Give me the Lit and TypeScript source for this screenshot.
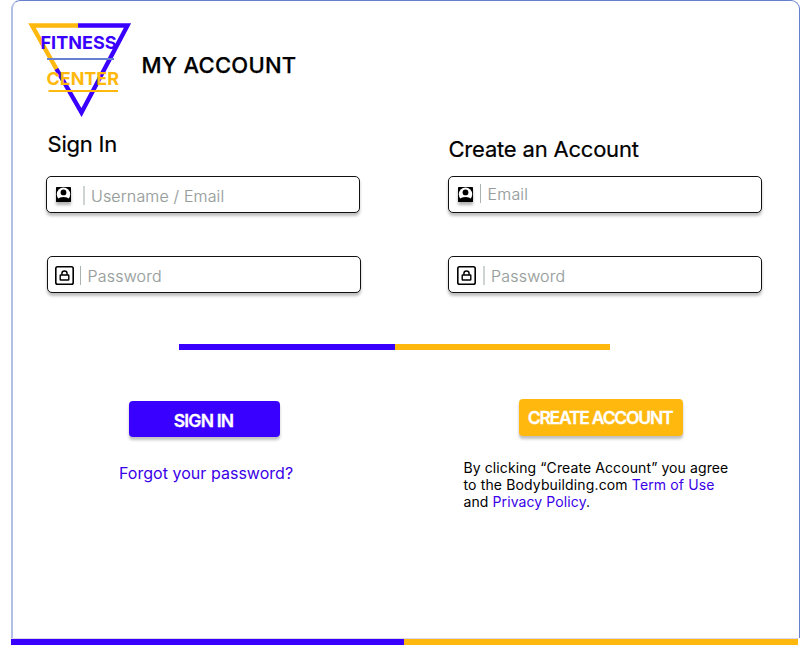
import { LitElement, html, css, svg } from "lit";
import { customElement, property } from "lit/decorators.js";

const personIcon = svg`
  <rect x="0" y="0" width="15" height="15" rx="0.6" fill="#000"/>
  <circle cx="7.5" cy="7.2" r="6.700" fill="#fff"/>
  <circle cx="7.5" cy="5.4" r="2.900" fill="#000"/>
  <path d="M1.500 14.500v-2C3 10.700 5 10 7.500 10s4.500 0.700 6 2.500v2z" fill="#000"/>`;

const lockIcon = svg`
  <rect x="0.8" y="0.8" width="17.4" height="17.4" rx="1.8" fill="#fff" stroke="#000" stroke-width="1.6"/>
  <rect x="5.200" y="9" width="8.6" height="5" rx="0.6" fill="none" stroke="#000" stroke-width="1.4"/>
  <path d="M6.900 9V7.600a2.600 2.600 0 0 1 5.200 0V9" fill="none" stroke="#000" stroke-width="1.4"/>`;

@customElement("account-field")
export class AccountField extends LitElement {
  @property() icon = "person";
  @property() label = "";

  static styles = css`
    :host { display: block; }
    .box {
      box-sizing: border-box; width: 314px; height: 37px;
      border: 1px solid #111; border-radius: 5px; background: #fff;
      box-shadow: 0 3px 3px rgba(0, 0, 0, 0.25);
      display: flex; align-items: center;
      padding-top: var(--drop, 0);
      padding-left: var(--icon-start, 9px);
    }
    svg { display: block; flex: none; overflow: visible; }
    .person { filter: drop-shadow(0 3px 1.5px rgba(0, 0, 0, 0.3)); }
    .rule {
      width: var(--rule-width, 1px); height: 19px; flex: none;
      margin-left: var(--rule-start, 6px);
      background: var(--rule-color, #aab3b0);
    }
    .label {
      margin-left: var(--label-start, 6px);
      font: 300 16px/20px Inter, sans-serif; color: #969d9b;
      letter-spacing: var(--label-spacing, 0.2px); white-space: nowrap;
      -webkit-text-stroke: 0.15px #969d9b;
    }
    .group { display: flex; align-items: center; transform: translateY(var(--shift, 0)); }
  `;

  render() {
    const person = this.icon === "person";
    const size = person ? 15 : 19;
    return html`<div class="box">
      <svg class=${this.icon} width=${size} height=${size} viewBox="0 0 ${size} ${size}">
        ${person ? personIcon : lockIcon}
      </svg>
      <div class="group"><span class="rule"></span><span class="label">${this.label}</span></div>
    </div>`;
  }
}

@customElement("app-root")
export class AppRoot extends LitElement {
  static styles = css`
    :host {
      display: block; width: 800px; height: 645px; overflow: hidden;
      background: #fff; color: #000; font-family: Inter, sans-serif;
    }
    .page { display: flex; flex-direction: column; height: 645px; }
    .frame {
      box-sizing: border-box; width: 789px; height: 638px; margin-left: 11px;
      border: 1px solid #6680cf; border-left: 2px solid #b1c0e4; border-bottom: 0;
      border-radius: 9px 9px 0 0;
    }
    header { display: flex; align-items: flex-start; padding: 21px 0 0 15px; height: 97px; }
    .logo { display: block; flex: none; }
    .logo text { font: 700 18px Inter, sans-serif; }
    h1 {
      margin: 28px 0 0 10.500px; font-size: 22px; line-height: 30px; font-weight: 500;
      letter-spacing: 0.25px; white-space: nowrap; -webkit-text-stroke: 0.25px #000;
    }
    .forms { display: flex; gap: 88px; padding-left: 33px; height: 222px; }
    .form { width: 314px; flex: none; }
    h2 {
      margin: 0; font-size: 22px; line-height: 30px; font-weight: 400; letter-spacing: -0.2px;
      white-space: nowrap; -webkit-text-stroke: 0.2px #000;
    }
    .sign h2 { margin: 10px 0 17px 1.500px; }
    .create h2 { margin: 15px 0 12px 0.500px; }
    account-field { margin-bottom: 43px; }
    .user { --icon-start: 9px; --rule-start: 12px; --rule-width: 2px; --rule-color: #cfd4d3; --label-start: 6px; --shift: 1px; --label-spacing: 0.15px; }
    .pass { margin-left: 1px; --icon-start: 7px; --rule-start: 6px; --drop: 2px; --label-start: 6.500px; }
    .mail { --icon-start: 9px; --rule-start: 7px; --shift: -1px; --label-start: 6.500px; }
    .newpass { --icon-start: 8px; --rule-start: 7px; --rule-width: 2px; --rule-color: #cfd4d3; --drop: 2px; }
    .split { display: flex; width: 431px; height: 6px; margin: 3px 0 0 166px; background: linear-gradient(90deg, #3a00ff 50%, #ffb80e 50%); }
    .actions { display: flex; padding-left: 106px; }
    .left { width: 344px; flex: none; }
    button {
      display: block; box-sizing: border-box; border: 0; border-radius: 4px; padding: 0;
      color: #fff; font: 600 17.500px/36px Inter, sans-serif; white-space: nowrap; text-align: center;
      box-shadow: 0 3px 3px rgba(0, 0, 0, 0.25); -webkit-text-stroke: 0.3px #fff;
    }
    .signin { width: 151px; height: 36px; padding: 1px 2px 0 0; line-height: 37px; margin: 51px 0 0 10px; background: #3a00ff; letter-spacing: -0.800px; }
    .signup { width: 164px; height: 37px; padding-right: 2px; margin: 49px 0 0 56px; background: #ffb80e; letter-spacing: -1.220px; }
    a { color: #3a00e8; text-decoration: none; }
    .forgot { display: block; margin-top: 26px; font-size: 16px; line-height: 20px; letter-spacing: 0.03px; white-space: nowrap; }
    .terms { margin: 23px 0 0 0.500px; font-size: 14px; line-height: 17px; letter-spacing: 0.1px; white-space: nowrap; }
    .line { display: block; }
    .wide { letter-spacing: 0.140px; }
    .footer { height: 6px; flex: none; margin: 1px 2px 0 11px; background: linear-gradient(90deg, #3a00ff 393px, #ffb80e 393px); box-shadow: 0 -1px 0 rgba(150, 140, 220, 0.35); }
  `;

  render() {
    return html`<div class="page">
      <main class="frame">
        <header>
          <svg class="logo" width="103" height="95" viewBox="28 22 103 95">
            <g fill="none" stroke-width="4.400">
              <path d="M78 25.500H32L57 70" stroke="#ffb80e"/>
              <path d="M78 25.500H127.500L81.500 112.500L56.500 69" stroke="#3a00ff"/>
            </g>
            <path d="M47 59H114" stroke="#6680cf" stroke-width="2"/>
            <path d="M48.500 91H118" stroke="#ffb80e" stroke-width="2"/>
            <text x="40.500" y="49.300" fill="#3a00ff" textLength="76">FITNESS</text>
            <text x="46.500" y="85.300" fill="#ffb80e" textLength="72.500">CENTER</text>
          </svg>
          <h1>MY ACCOUNT</h1>
        </header>
        <section class="forms">
          <div class="form sign">
            <h2>Sign In</h2>
            <account-field class="user" icon="person" label="Username / Email"></account-field>
            <account-field class="pass" icon="lock" label="Password"></account-field>
          </div>
          <div class="form create">
            <h2>Create an Account</h2>
            <account-field class="mail" icon="person" label="Email"></account-field>
            <account-field class="newpass" icon="lock" label="Password"></account-field>
          </div>
        </section>
        <div class="split"></div>
        <section class="actions">
          <div class="left">
            <button class="signin">SIGN IN</button>
            <a class="forgot">Forgot your password?</a>
          </div>
          <div>
            <button class="signup">CREATE ACCOUNT</button>
            <p class="terms">
              <span class="line">By clicking “Create Account” you agree</span>
              <span class="line wide">to the Bodybuilding.com <a>Term of Use</a></span>
              <span class="line">and <a>Privacy Policy</a>.</span>
            </p>
          </div>
        </section>
      </main>
      <div class="footer"></div>
    </div>`;
  }
}
